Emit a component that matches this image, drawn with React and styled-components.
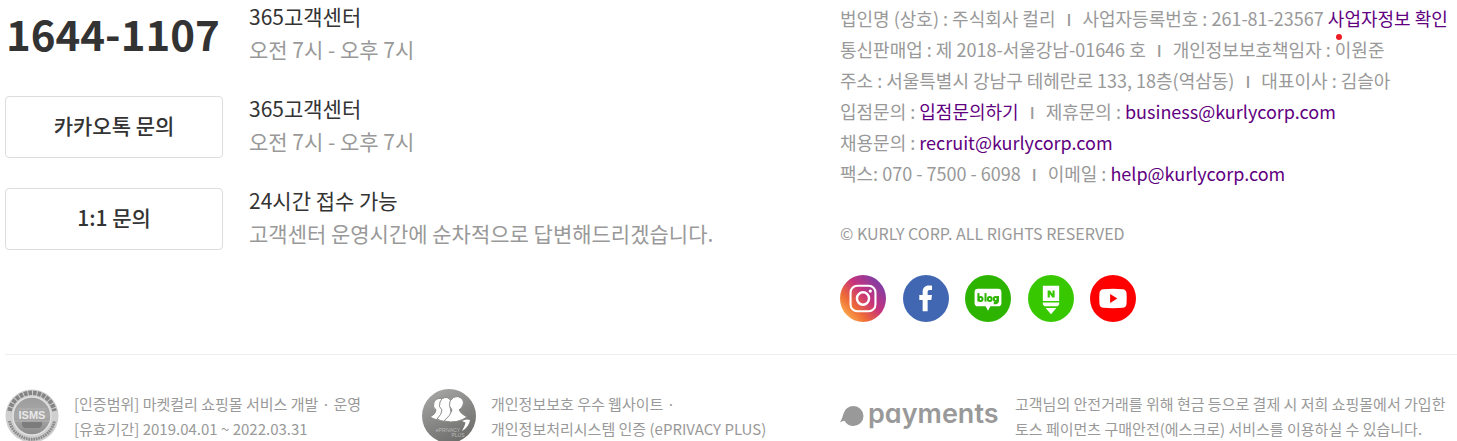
import React from 'react';
import styled, { createGlobalStyle } from 'styled-components';

const GlobalStyle = createGlobalStyle`
  * { box-sizing: border-box; }
  body {
    margin: 0;
    background: #fff;
    color: #333;
    font-family: "Noto Sans CJK KR", "Noto Sans", sans-serif;
    word-break: keep-all;
  }
`;

const Footer = styled.footer`
  padding-left: 5px;
  overflow-x: clip;
`;

const Columns = styled.div`
  display: grid;
  grid-template-columns: minmax(0, 835fr) minmax(0, 617fr);
`;

const Support = styled.section`
  display: flex;
  flex-direction: column;
  gap: 26px;
`;

const SupportRow = styled.div`
  display: grid;
  grid-template-columns: 218px 1fr;
  column-gap: 26px;
  align-items: start;
`;

const Phone = styled.strong`
  padding-left: 1px;
  font-size: 42px;
  line-height: 66px;
  font-weight: 700;
  white-space: nowrap;
`;

const ContactButton = styled.button`
  height: 62px;
  margin-top: 4px;
  padding: 0 0 4px;
  border: 1px solid #ddd;
  border-radius: 4px;
  background: #fff;
  color: #333;
  font-family: inherit;
  font-size: 21px;
  font-weight: 500;
  cursor: pointer;
`;

const Hours = styled.dl`
  margin: 0;
  font-size: 21px;
  line-height: 33px;
`;

const HoursTitle = styled.dt`
  color: #333;
`;

const HoursText = styled.dd`
  margin: 0;
  color: #999;
`;

const Company = styled.section`
  padding-top: 3px;
  white-space: nowrap;
`;

const CompanyLine = styled.p`
  margin: 0;
  color: #999;
  font-size: 18px;
  line-height: 31px;
`;

const Bar = styled.span`
  margin: 0 11px;
  font-size: 16px;
  line-height: 1;
  font-weight: 500;
`;

const InfoLink = styled.a`
  position: relative;
  color: #5f0080;
  text-decoration: none;
`;

const Dot = styled.i`
  position: absolute;
  left: 8px;
  bottom: -9px;
  width: 6px;
  height: 6px;
  border-radius: 50%;
  background: #ee1c24;
`;

const Copyright = styled.p`
  margin: 31px 0 0;
  color: #999;
  font-size: 16px;
  line-height: 26px;
`;

const SocialList = styled.ul`
  display: flex;
  justify-content: space-between;
  width: 296px;
  margin: 29px 0 0;
  padding: 0;
  list-style: none;
`;

const SocialLink = styled.a`
  display: block;
  width: 46px;
  height: 47px;
  svg { display: block; width: 100%; height: 100%; }
`;

const Marks = styled.section`
  display: grid;
  grid-template-columns: minmax(0, 417fr) minmax(0, 418fr) minmax(0, 617fr);
  margin-top: 32px;
  padding-top: 34px;
  border-top: 1px solid #eee;
`;

const Mark = styled.div`
  display: flex;
  align-items: center;
  gap: 15px;
`;

const Badge = styled.svg`
  flex: none;
  width: 54px;
  height: 54px;
`;

const MarkText = styled.p`
  margin: 0;
  color: #999;
  font-size: 15px;
  line-height: 25px;
  white-space: nowrap;
`;

const PaymentsLogo = styled.svg`
  flex: none;
  width: 160px;
  height: 40px;
  font-family: Inter, sans-serif;
  font-size: 27px;
  font-weight: 600;
  font-feature-settings: "cv11";
`;

const supportRows = [
  { phone: '1644-1107', title: '365고객센터', text: '오전 7시 - 오후 7시' },
  { button: '카카오톡 문의', title: '365고객센터', text: '오전 7시 - 오후 7시' },
  { button: '1:1 문의', title: '24시간 접수 가능', text: '고객센터 운영시간에 순차적으로 답변해드리겠습니다.' },
];

const Instagram = () => (
  <svg viewBox="0 0 48 48" preserveAspectRatio="none" aria-hidden="true">
    <defs>
      <linearGradient id="insta" x1="0.1" y1="0.9" x2="0.9" y2="0.15">
        <stop offset="0" stopColor="#fdb04c" />
        <stop offset="0.28" stopColor="#ee6a37" />
        <stop offset="0.6" stopColor="#c7327c" />
        <stop offset="1" stopColor="#7b3fa8" />
      </linearGradient>
    </defs>
    <circle cx="24" cy="24" r="24" fill="url(#insta)" />
    <rect x="11" y="11" width="26" height="26" rx="7" fill="none" stroke="#fff" strokeWidth="2.2" />
    <circle cx="24" cy="24" r="6.3" fill="none" stroke="#fff" strokeWidth="2.6" />
    <circle cx="31.6" cy="16.4" r="1.7" fill="#fff" />
  </svg>
);

const Facebook = () => (
  <svg viewBox="0 0 48 48" preserveAspectRatio="none" aria-hidden="true">
    <circle cx="24" cy="24" r="24" fill="#4267b2" />
    <path d="M20.5 37V25.5H17V20.5H20.5V17.5C20.5 13 23 10.7 27 10.7C28.5 10.7 29.6 10.8 30.3 10.9V15.4H27.8C26.2 15.4 25.7 16.2 25.7 17.6V20.5H30.2L29.6 25.5H25.7V37Z" fill="#fff" />
  </svg>
);

const Blog = () => (
  <svg viewBox="0 0 48 48" preserveAspectRatio="none" aria-hidden="true">
    <circle cx="24" cy="24" r="24" fill="#2db400" />
    <path d="M13.5 14H34.5Q38 14 38 17.5V28.5Q38 32 34.5 32H26.5L24 36.5L21.5 32H13.5Q10 32 10 28.5V17.5Q10 14 13.5 14Z" fill="#fff" />
    <g fill="none" stroke="#2db400" strokeWidth="2.1">
      <path d="M14 18.5V27" /><circle cx="16.3" cy="24.5" r="2" />
      <path d="M21.4 18.5V27.2" /><circle cx="25.8" cy="24.5" r="2" />
      <circle cx="32" cy="24.5" r="2" /><path d="M34.4 21.5V26.5Q34.4 29 30 28.7" />
    </g>
  </svg>
);

const Post = () => (
  <svg viewBox="0 0 48 48" preserveAspectRatio="none" aria-hidden="true">
    <circle cx="24" cy="24" r="24" fill="#37c800" />
    <path d="M15.5 11H32.5V26.5H15.5ZM15.5 28H32.5V30L31 32H17L15.5 30ZM18.4 33.8H29.6L24 40Z" fill="#fff" />
    <path d="M20.5 23V15.8H23L25.5 19.5V15.8H27.8V23H25.4L22.8 19.3V23Z" fill="#37c800" />
  </svg>
);

const Youtube = () => (
  <svg viewBox="0 0 48 48" preserveAspectRatio="none" aria-hidden="true">
    <circle cx="24" cy="24" r="24" fill="#f00" />
    <path d="M14 14.5Q24 13.6 34 14.5Q37.8 14.8 38.1 18.5Q38.6 24 38.1 29.5Q37.8 33.2 34 33.5Q24 34.4 14 33.5Q10.2 33.2 9.9 29.5Q9.4 24 9.9 18.5Q10.2 14.8 14 14.5Z" fill="#fff" />
    <path d="M21 19.5V28.5L28.5 24Z" fill="#f00" />
  </svg>
);

const socials = [
  ['인스타그램', Instagram],
  ['페이스북', Facebook],
  ['네이버 블로그', Blog],
  ['네이버 포스트', Post],
  ['유튜브', Youtube],
];

const IsmsBadge = () => (
  <Badge viewBox="0 0 54 54" role="img" aria-label="ISMS">
    <defs>
      <linearGradient id="isms" x1="0" y1="0" x2="0" y2="1">
        <stop offset="0" stopColor="#9c9c9c" />
        <stop offset="0.5" stopColor="#a8a8a8" />
        <stop offset="1" stopColor="#8c8c8c" />
      </linearGradient>
    </defs>
    <circle cx="27" cy="27" r="26.5" fill="#cfcfcf" />
    <path d="M4.5 22A23 23 0 0 1 49.5 22" fill="none" stroke="#858585" strokeWidth="4.6" strokeDasharray="3.6 1" />
    <path d="M4.5 32A23 23 0 0 0 49.5 32" fill="none" stroke="#8c8c8c" strokeWidth="3" strokeDasharray="1.8 0.7" />
    <circle cx="27" cy="27" r="19" fill="url(#isms)" stroke="#e0e0e0" strokeWidth="1.5" />
    <path d="M13 20H41M10 32H44" stroke="#b8b8b8" strokeWidth="0.8" />
    <text x="27" y="30" textAnchor="middle" fontFamily="Liberation Sans, sans-serif" fontWeight="700" fontSize="11" fill="#e8e8e8">ISMS</text>
    <path d="M17 33H37V36Q36 39 33 39H21Q18 39 17 36Z" fill="#7c7c7c" />
  </Badge>
);

const PrivacyBadge = () => (
  <Badge viewBox="0 0 54 54" role="img" aria-label="ePRIVACY PLUS">
    <defs>
      <linearGradient id="privacy" x1="0.2" y1="0" x2="0.7" y2="1">
        <stop offset="0" stopColor="#a6a6a4" />
        <stop offset="0.5" stopColor="#888886" />
        <stop offset="1" stopColor="#6c6c6a" />
      </linearGradient>
    </defs>
    <circle cx="27" cy="27" r="27" fill="url(#privacy)" />
    <g fill="#fff" stroke="#8a8a88" strokeWidth="1">
      <path d="M8 28Q14 25 14 21Q10 18 12 13Q14 9 19 9.500Q24 11 22 18Q22 24 28 31Q16 33 8 28Z" />
      <path d="M15 30Q20 25 20 21Q16 18 18 13Q20 8 25 8.500Q31 10 28 18Q28 24 34 32Q22 34 15 30Z" />
      <path d="M22 32Q29 26 30 21Q26 17 28 12Q31 7 36 7.500Q43 10 41 16Q40 19 37 21Q39 25 45 28Q35 35 22 32Z" />
    </g>
    <path d="M40 32Q44 29.500 48 31Q47 38 40 42Q43 37 43.500 33.500Z" fill="#fff" />
    <text x="26" y="43" textAnchor="middle" fontFamily="Liberation Sans, sans-serif" fontSize="5" fill="#bbb">ePRIVACY</text>
    <text x="36" y="48" textAnchor="middle" fontFamily="Liberation Sans, sans-serif" fontSize="5" fill="#bbb">PLUS</text>
  </Badge>
);

const Payments = () => (
  <PaymentsLogo viewBox="0 0 160 40" role="img" aria-label="payments">
    <path d="M0 26.500Q2.500 22 3.500 17.500Q6 10 13.500 10A10 10 0 0 1 13.500 30Q7.500 30 4.500 24.800Q2.500 24.800 0 26.500Z" fill="#999" />
    <text x="28" y="27" fill="#999">payments</text>
  </PaymentsLogo>
);

export default function App() {
  return (
    <Footer>
      <GlobalStyle />
      <Columns>
        <Support>
          {supportRows.map((row) => (
            <SupportRow key={row.phone || row.button}>
              {row.phone ? <Phone>{row.phone}</Phone> : <ContactButton type="button">{row.button}</ContactButton>}
              <Hours>
                <HoursTitle>{row.title}</HoursTitle>
                <HoursText>{row.text}</HoursText>
              </Hours>
            </SupportRow>
          ))}
        </Support>
        <Company>
          <CompanyLine>
            법인명 (상호) : 주식회사 컬리<Bar>I</Bar>사업자등록번호 : 261-81-23567{' '}
            <InfoLink href="#business-info">사업자정보 확인<Dot /></InfoLink>
          </CompanyLine>
          <CompanyLine>통신판매업 : 제 2018-서울강남-01646 호<Bar>I</Bar>개인정보보호책임자 : 이원준</CompanyLine>
          <CompanyLine>주소 : 서울특별시 강남구 테헤란로 133, 18층(역삼동)<Bar>I</Bar>대표이사 : 김슬아</CompanyLine>
          <CompanyLine>
            입점문의 : <InfoLink href="#partner">입점문의하기</InfoLink><Bar>I</Bar>제휴문의 :{' '}
            <InfoLink href="mailto:business@kurlycorp.com">business@kurlycorp.com</InfoLink>
          </CompanyLine>
          <CompanyLine>
            채용문의 : <InfoLink href="mailto:recruit@kurlycorp.com">recruit@kurlycorp.com</InfoLink>
          </CompanyLine>
          <CompanyLine>
            팩스: 070 - 7500 - 6098<Bar>I</Bar>이메일 :{' '}
            <InfoLink href="mailto:help@kurlycorp.com">help@kurlycorp.com</InfoLink>
          </CompanyLine>
          <Copyright>© KURLY CORP. ALL RIGHTS RESERVED</Copyright>
          <SocialList>
            {socials.map(([name, Icon]) => (
              <li key={name}>
                <SocialLink href="#social" aria-label={name}><Icon /></SocialLink>
              </li>
            ))}
          </SocialList>
        </Company>
      </Columns>
      <Marks>
        <Mark>
          <IsmsBadge />
          <MarkText>[인증범위] 마켓컬리 쇼핑몰 서비스 개발 · 운영<br />[유효기간] 2019.04.01 ~ 2022.03.31</MarkText>
        </Mark>
        <Mark>
          <PrivacyBadge />
          <MarkText>개인정보보호 우수 웹사이트 ·<br />개인정보처리시스템 인증 (ePRIVACY PLUS)</MarkText>
        </Mark>
        <Mark>
          <Payments />
          <MarkText>고객님의 안전거래를 위해 현금 등으로 결제 시 저희 쇼핑몰에서 가입한<br />토스 페이먼츠 구매안전(에스크로) 서비스를 이용하실 수 있습니다.</MarkText>
        </Mark>
      </Marks>
    </Footer>
  );
}
